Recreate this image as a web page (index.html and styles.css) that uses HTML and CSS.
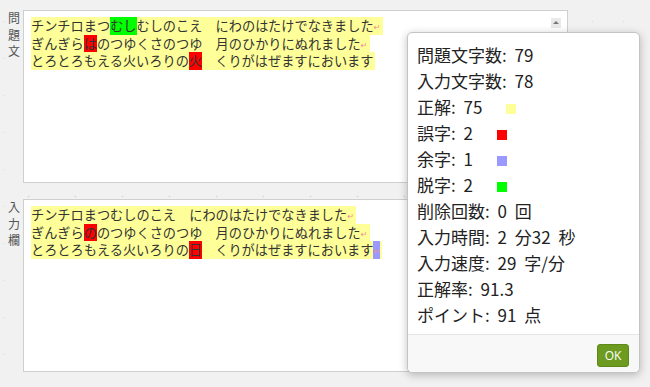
FILE: index.html
```html
<!DOCTYPE html>
<html lang="ja">
<head>
    <meta charset="UTF-8">
    <meta name="viewport" content="width=device-width, initial-scale=1.0">
    <title>タイピング結果</title>
    <link rel="stylesheet" href="styles.css">
</head>
<body>
    <div class="page">
        <div class="field">
            <div class="field-label">問題文</div>
            <div class="editor">
                <div class="line">チンチロまつ<span class="hl hl-miss">むし</span>むしのこえ　にわのはたけでなきました<span class="eol">↵</span></div>
                <div class="line">ぎんぎら<span class="hl hl-wrong">は</span>のつゆくさのつゆ　月のひかりにぬれました<span class="eol">↵</span></div>
                <div class="line">とろとろもえる火いろりの<span class="hl hl-wrong">火</span>　くりがはぜますにおいます</div>
                <span class="scroll-up"></span>
            </div>
        </div>

        <div class="field">
            <div class="field-label">入力欄</div>
            <div class="editor">
                <div class="line">チンチロまつむしのこえ　にわのはたけでなきました<span class="eol">↵</span></div>
                <div class="line">ぎんぎら<span class="hl hl-wrong">の</span>のつゆくさのつゆ　月のひかりにぬれました<span class="eol">↵</span></div>
                <div class="line">とろとろもえる火いろりの<span class="hl hl-wrong">日</span>　くりがはぜますにおいます<span class="eol hl-extra">↵</span></div>
            </div>
        </div>

        <!-- result dialog -->
        <div class="result-dialog">
            <div class="result-body">
                <div class="stat">問題文字数: 79</div>
                <div class="stat">入力文字数: 78</div>
                <div class="stat">正解: 75<span class="swatch swatch-ok"></span></div>
                <div class="stat">誤字: 2<span class="swatch swatch-wrong"></span></div>
                <div class="stat">余字: 1<span class="swatch swatch-extra"></span></div>
                <div class="stat">脱字: 2<span class="swatch swatch-miss"></span></div>
                <div class="stat">削除回数: 0 回</div>
                <div class="stat">入力時間: 2 分32 秒</div>
                <div class="stat">入力速度: 29 字/分</div>
                <div class="stat">正解率: 91.3</div>
                <div class="stat">ポイント: 91 点</div>
            </div>
            <div class="result-footer">
                <button class="btn-ok">OK</button>
            </div>
        </div>
    </div>
</body>
</html>
```

FILE: styles.css
```css
* {
    margin: 0;
    padding: 0;
    box-sizing: border-box;
}

body {
    font-family: "Noto Sans CJK JP", "Noto Sans", sans-serif;
    color: #333;
    background-color: #f1f1f1;
    background-image:
        radial-gradient(circle, #d9d9d9 0.7px, transparent 1.2px),
        radial-gradient(circle, #e0e0e0 0.6px, transparent 1.1px);
    background-size: 47px 53px, 31px 37px;
    background-position: 5px 11px, 19px 3px;
    width: 650px;
    height: 387px;
    overflow: hidden;
}

.page {
    position: relative;
    height: 100%;
    padding: 10px 0 0 8px;
}

.field {
    display: flex;
    margin-bottom: 16px;
}

.field-label {
    width: 13px;
    margin-right: 2px;
    font-size: 12px;
    line-height: 16.5px;
    color: #555;
}

.editor {
    position: relative;
    width: 545px;
    height: 173px;
    padding: 6px 7px;
    background: white;
    border: 1px solid #cfcfcf;
    font-size: 13.2px;
    line-height: 17.5px;
}

.line {
    width: fit-content;
    height: 17.5px;
    padding-right: 2px;
    white-space: pre;
    background: #ffff99;
}

.hl {
    display: inline-block;
    line-height: 17.5px;
    height: 17.5px;
}

.hl-miss { background: #00ff00; }
.hl-wrong { background: #ff0000; }
.hl-extra { background: #9999ff; }

.eol {
    display: inline-block;
    width: 7px;
    height: 17.5px;
    font-family: "DejaVu Sans", sans-serif;
    font-size: 8px;
    line-height: 22px;
    color: #f08c8c;
    vertical-align: top;
    text-align: center;
}

.scroll-up {
    position: absolute;
    top: 7px;
    right: 6px;
    width: 10px;
    height: 10px;
    background: #e9e9e9;
}

.scroll-up::after {
    content: "";
    position: absolute;
    left: 2px;
    top: 3px;
    border-left: 3px solid transparent;
    border-right: 3px solid transparent;
    border-bottom: 3px solid #777;
}

.result-dialog {
    position: absolute;
    left: 407px;
    top: 32px;
    width: 233px;
    height: 341px;
    display: flex;
    flex-direction: column;
    background: white;
    border: 1px solid #c4c4c4;
    border-radius: 5px;
    box-shadow: 0 2px 8px rgba(0,0,0,0.25);
    color: #222;
}

.result-body {
    flex: 1;
    padding: 9px 9px 0;
}

.stat {
    font-size: 17px;
    line-height: 26px;
    word-spacing: 4px;
    white-space: nowrap;
}

.swatch {
    display: inline-block;
    width: 10px;
    height: 10px;
    margin-left: 24px;
    vertical-align: 0;
}

.swatch-ok { background: #ffff99; }
.swatch-wrong { background: #ff0000; }
.swatch-extra { background: #9999ff; }
.swatch-miss { background: #00ff00; }

.result-footer {
    padding: 6px 10px 5px;
    text-align: right;
    background: #f8f8f8;
    border-top: 1px solid #e6e6e6;
    border-radius: 0 0 5px 5px;
}

.btn-ok {
    width: 32px;
    height: 23px;
    font-family: "Open Sans", sans-serif;
    font-size: 12px;
    color: white;
    background: #6c9b1f;
    border: 1px solid #5d8a17;
    border-radius: 3px;
    cursor: pointer;
}
```
